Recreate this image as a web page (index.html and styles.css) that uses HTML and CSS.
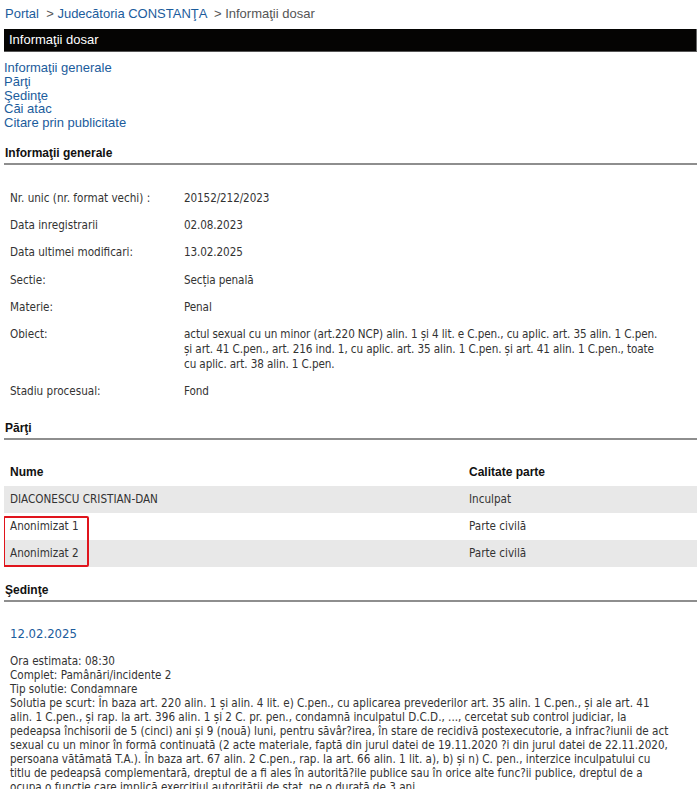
FILE: index.html
```html
<!DOCTYPE html>
<html lang="ro">
<head>
  <meta charset="UTF-8" />
  <title>Informaţii dosar</title>
  <link rel="stylesheet" href="styles.css">
</head>
<body>

  <!-- Breadcrumb -->
  <div class="crumbs">
    <a href="#">Portal</a> &nbsp;&gt; <a href="#">Judecătoria CONSTANŢA</a> &nbsp;&gt; Informaţii dosar
  </div>

  <div class="title-bar">Informaţii dosar</div>

  <ul class="toc">
    <li><a href="#generale">Informaţii generale</a></li>
    <li><a href="#parti">Părţi</a></li>
    <li><a href="#sedinte">Şedinţe</a></li>
    <li><a href="#cai">Căi atac</a></li>
    <li><a href="#citare">Citare prin publicitate</a></li>
  </ul>

  <!-- Informatii generale -->
  <h2 class="section" id="generale">Informaţii generale</h2>
  <table class="info">
    <tr><td class="lbl">Nr. unic (nr. format vechi) :</td><td class="val">20152/212/2023</td></tr>
    <tr><td class="lbl">Data inregistrarii</td><td class="val">02.08.2023</td></tr>
    <tr><td class="lbl">Data ultimei modificari:</td><td class="val">13.02.2025</td></tr>
    <tr><td class="lbl">Sectie:</td><td class="val">Secția penală</td></tr>
    <tr><td class="lbl">Materie:</td><td class="val">Penal</td></tr>
    <tr><td class="lbl">Obiect:</td><td class="val">actul sexual cu un minor (art.220 NCP) alin. 1 și 4 lit. e C.pen., cu aplic. art. 35 alin. 1 C.pen. și art. 41 C.pen., art. 216 ind. 1, cu aplic. art. 35 alin. 1 C.pen. și art. 41 alin. 1 C.pen., toate cu aplic. art. 38 alin. 1 C.pen.</td></tr>
    <tr><td class="lbl">Stadiu procesual:</td><td class="val">Fond</td></tr>
  </table>

  <!-- Parti -->
  <h2 class="section" id="parti">Părţi</h2>
  <div class="parti-wrap">
    <table class="parti">
      <tr><th>Nume</th><th class="col2">Calitate parte</th></tr>
      <tr class="odd"><td>DIACONESCU CRISTIAN-DAN</td><td class="col2">Inculpat</td></tr>
      <tr><td>Anonimizat 1</td><td class="col2">Parte civilă</td></tr>
      <tr class="odd"><td>Anonimizat 2</td><td class="col2">Parte civilă</td></tr>
    </table>
    <div class="mark"></div>
  </div>

  <!-- Sedinte -->
  <h2 class="section" id="sedinte">Şedinţe</h2>
  <div class="sedinta">
    <div class="data">12.02.2025</div>
    <p class="detalii">
      Ora estimata: 08:30<br>
      Complet: Pamânări/incidente 2<br>
      Tip solutie: Condamnare<br>
      Solutia pe scurt: În baza art. 220 alin. 1 și alin. 4 lit. e) C.pen., cu aplicarea prevederilor art. 35 alin. 1 C.pen., și ale art. 41 alin. 1 C.pen., și rap. la art. 396 alin. 1 și 2 C. pr. pen., condamnă inculpatul D.C.D., ..., cercetat sub control judiciar, la pedeapsa închisorii de 5 (cinci) ani și 9 (nouă) luni, pentru săvâr?irea, în stare de recidivă postexecutorie, a infrac?iunii de act sexual cu un minor în formă continuată (2 acte materiale, faptă din jurul datei de 19.11.2020 ?i din jurul datei de 22.11.2020, persoana vătămată T.A.). În baza art. 67 alin. 2 C.pen., rap. la art. 66 alin. 1 lit. a), b) și n) C. pen., interzice inculpatului cu titlu de pedeapsă complementară, dreptul de a fi ales în autorită?ile publice sau în orice alte func?ii publice, dreptul de a ocupa o funcţie care implică exerciţiul autorităţii de stat, pe o durată de 3 ani.
    </p>
  </div>

</body>
</html>
```

FILE: styles.css
```css
body {
  margin: 0 3px 0 4px;
  font-family: "DejaVu Sans Condensed", Tahoma, sans-serif;
  font-size: 11.6px;
  color: #333;
  background: #fff;
}

a {
  color: #1b5c9c;
  text-decoration: none;
}

/* Breadcrumb */
.crumbs {
  font-family: "Liberation Sans", Arial, sans-serif;
  font-size: 13px;
  color: #555;
  padding: 6px 0 0 1px;
  height: 23px;
}

.title-bar {
  background: #050403;
  color: #fff;
  font-family: "Liberation Sans", Arial, sans-serif;
  font-size: 13px;
  line-height: 22px;
  padding-left: 5px;
  border-right: 1px solid #666;
  border-bottom: 1px solid #555;
}

.toc {
  list-style: none;
  margin: 9px 0 0;
  padding: 0;
  font-family: "Liberation Sans", Arial, sans-serif;
  font-size: 13px;
  line-height: 13.8px;
}

/* Section headings */
.section {
  font-family: "Liberation Sans", Arial, sans-serif;
  font-size: 12px;
  font-weight: bold;
  color: #111;
  margin: 16px 0 0;
  padding: 0 0 3px 1px;
  border-bottom: 2px solid #8e8e8e;
}

/* General info */
.info {
  border-collapse: collapse;
  margin: 20px 0 16px;
  width: 668px;
}
.info td {
  padding: 6px 6px 6.2px;
  vertical-align: top;
  line-height: 15px;
}
.info .lbl {
  width: 162px;
}
.info .val {
  letter-spacing: -0.1px;
}

/* Parties */
.parti-wrap {
  position: relative;
  margin: 18px 0 13px;
}
.parti {
  border-collapse: collapse;
  width: 100%;
}
.parti th {
  font-family: "Liberation Sans", Arial, sans-serif;
  font-size: 12px;
  color: #111;
  text-align: left;
  padding: 7px 6px;
}
.parti td {
  padding: 6px;
  line-height: 15px;
}
.parti .odd {
  background: #e8e8e8;
}
.parti .col2 {
  width: 222px;
}
.mark {
  position: absolute;
  left: -1px;
  top: 58px;
  width: 82px;
  height: 47px;
  border: 2px solid #e0141c;
  border-radius: 2px;
}

/* Hearings */
.sedinta {
  padding: 24px 26px 0 6px;
}
.sedinta .data {
  color: #1b5c9c;
  font-size: 13px;
  line-height: 16px;
}
.detalii {
  margin: 12px 0 0;
  line-height: 14px;
}
```
